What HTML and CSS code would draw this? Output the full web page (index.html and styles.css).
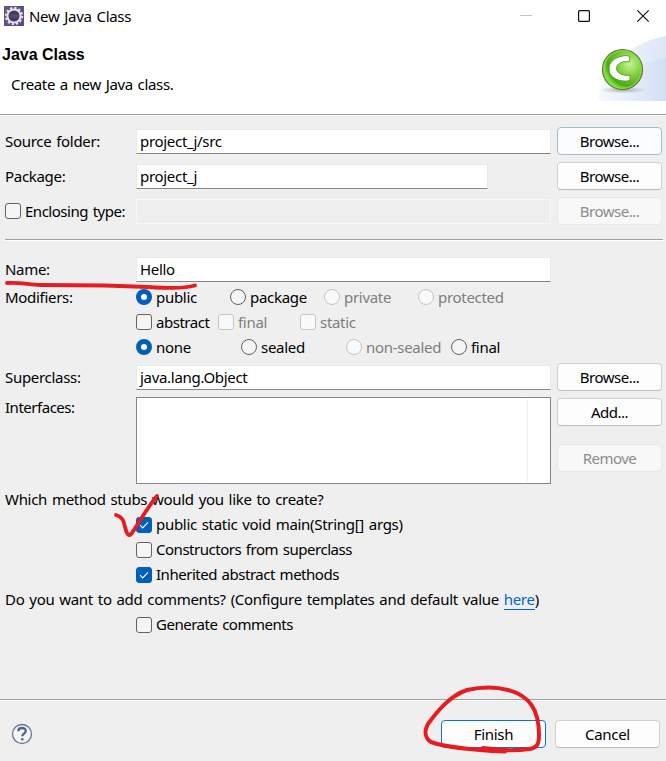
FILE: index.html
```html
<!DOCTYPE html>
<html lang="en">
<head>
<meta charset="utf-8">
<title>New Java Class</title>
<link rel="stylesheet" href="styles.css">
</head>
<body>
<main class="dialog">
  <header class="head">
    <div class="titlebar">
      <svg class="app-icon" width="20" height="20" viewBox="0 0 20 20">
        <defs><linearGradient id="app" x1="0" y1="0" x2="1" y2="1"><stop offset="0" stop-color="#625a78"/><stop offset="1" stop-color="#62409a"/></linearGradient></defs>
        <rect width="20" height="20" fill="url(#app)"/>
        <circle cx="10" cy="10" r="8.2" fill="none" stroke="#e3dfe6" stroke-width="2" stroke-dasharray="2.3 1.993"/>
        <circle cx="10" cy="10" r="6.6" fill="#42395c" stroke="#e9e6ea" stroke-width="2"/>
        <path d="M5 9h10M5 11h10" stroke="#5f5678" stroke-width="1"/>
      </svg>
      <span class="caption">New Java Class</span>
      <svg class="controls" width="130" height="16" viewBox="0 0 130 16">
        <path d="M0 7.5h12" stroke="#c4c4c4" fill="none"/>
        <rect x="58.6" y="2.6" width="10.8" height="10.8" rx="1" fill="none" stroke="#111" stroke-width="1.2"/>
        <path d="M117.3 2.3l11.4 11.4M128.7 2.3L117.3 13.7" stroke="#111" stroke-width="1.2" fill="none"/>
      </svg>
    </div>
    <div class="banner">
      <div>
        <h1>Java Class</h1>
        <p>Create a new Java class.</p>
      </div>
      <svg class="emblem" width="68" height="66" viewBox="0 0 68 66">
        <defs>
          <linearGradient id="sky" x1="0" x2="1"><stop offset="0" stop-color="#f7f9fe"/><stop offset="1" stop-color="#dce6f7"/></linearGradient>
          <linearGradient id="sky2" x1="0" x2="1"><stop offset="0" stop-color="#eef3fc" stop-opacity="0"/><stop offset="1" stop-color="#cbdaf2"/></linearGradient>
          <radialGradient id="ball" cx=".68" cy=".36" r=".65"><stop offset="0" stop-color="#c9f29c"/><stop offset=".4" stop-color="#8ad648"/><stop offset=".85" stop-color="#4bac16"/><stop offset="1" stop-color="#7be03d"/></radialGradient>
          <radialGradient id="shade"><stop offset="0" stop-color="#85878a" stop-opacity=".7"/><stop offset="1" stop-color="#999" stop-opacity="0"/></radialGradient>
        </defs>
        <path d="M0 66C2 38 31 7 68 1v65z" fill="url(#sky)"/>
        <path d="M0 66C14 45 40 26 68 23v43z" fill="url(#sky2)" opacity=".65"/>
        <ellipse cx="25" cy="55" rx="24" ry="3.5" fill="url(#shade)"/>
        <circle cx="24.5" cy="34.5" r="20" fill="url(#ball)" stroke="#68733e" stroke-width="1.2"/>
        <circle cx="24.5" cy="34.5" r="18.6" fill="none" stroke="#83e044" stroke-width="1.4" opacity=".8"/>
        <path d="M32 21.500C29 20.300 27 20.500 24.500 21C16 22.500 11 27.500 11 34S16.500 45 25 46C27.500 46.300 29.500 46 32 45.500V40C29.500 40.500 27.500 40.500 25.500 39.800C21.500 38.800 18.500 37 18.500 33.500S21.500 27.800 25 27C27.500 26.500 29.500 26.500 31 27z" fill="#fff" stroke="#4d9b25" stroke-width=".9"/>
      </svg>
    </div>
  </header>

  <section class="form">
    <div class="row"><label class="name">Source folder:</label><div class="field">project_j/src</div><button class="btn hot">Browse...</button></div>
    <div class="row"><label class="name">Package:</label><div class="field short">project_j</div><button class="btn">Browse...</button></div>
    <div class="row"><label class="name opt"><i class="box"></i><span class="tight">Enclosing type:</span></label><div class="field off"></div><button class="btn dim">Browse...</button></div>
    <hr>
    <div class="row"><label class="name">Name:</label><div class="field">Hello</div></div>

    <div class="mods">
      <span class="name">Modifiers:</span>
      <div class="choices access">
        <label class="opt"><i class="dot on"></i>public</label><label class="opt"><i class="dot"></i>package</label><label class="opt dim"><i class="dot"></i>private</label><label class="opt dim"><i class="dot"></i>protected</label>
      </div>
      <div class="choices flags">
        <label class="opt"><i class="box"></i><span class="tight">abstract</span></label><label class="opt dim"><i class="box"></i>final</label><label class="opt dim"><i class="box"></i>static</label>
      </div>
      <div class="choices seal">
        <label class="opt"><i class="dot on"></i>none</label><label class="opt"><i class="dot"></i>sealed</label><label class="opt dim"><i class="dot"></i>non-sealed</label><label class="opt"><i class="dot"></i>final</label>
      </div>
    </div>

    <div class="row super"><label class="name">Superclass:</label><div class="field">java.lang.Object</div><button class="btn">Browse...</button></div>
    <div class="faces"><span class="name tight">Interfaces:</span><div class="list"><div class="gutter"></div></div><div class="side"><button class="btn">Add...</button><button class="btn dim">Remove</button></div></div>

    <p class="line first">Which method stubs would you like to create?</p>
    <label class="line opt stub"><i class="box on"><svg viewBox="0 0 16 16"><path d="M4 8.2l2.7 2.7L12 5.4"/></svg></i><span>public static void main(String[] args)</span></label>
    <label class="line opt stub"><i class="box"></i><span class="tight">Constructors from superclass</span></label>
    <label class="line opt stub"><i class="box on"><svg viewBox="0 0 16 16"><path d="M4 8.2l2.7 2.7L12 5.4"/></svg></i><span class="tight">Inherited abstract methods</span></label>
    <p class="line">Do you want to add comments? (Configure templates and default value <a>here</a>)</p>
    <label class="line opt stub"><i class="box"></i><span class="tight">Generate comments</span></label>
  </section>

  <footer class="foot">
    <svg class="help" width="22" height="22" viewBox="0 0 22 22">
      <circle cx="11" cy="11" r="9.5" fill="#f5f5f6" stroke="#65799a" stroke-width="1.3"/>
      <path d="M7.3 8.2C7.3 3.9 14.8 4 14.8 8c0 2.7-3.5 2.7-3.5 5.3" fill="none" stroke="#4e658d" stroke-width="2.3"/>
      <circle cx="11.3" cy="16.3" r="1.3" fill="#4e658d"/>
    </svg>
    <button class="btn primary">Finish</button>
    <button class="btn">Cancel</button>
  </footer>

  <svg class="marks" width="666" height="761" viewBox="0 0 666 761">
    <path d="M7 283C20 282 30 285 40 285L105 285.500 148 287C165 288 182 289 195 285.500" stroke-width="3.800"/>
    <path d="M116 515C123 517 124 522 125 527C127 535 129 537 132 533C140 521 147 508 157 496" stroke-width="3.800"/>
    <path d="M483 748C497 750 515 751 529 749C538 748 539 743 539 735C539 710 530 696 508 690C493 686 476 688 467 690C449 696 436 713 428 724C424 731 425 738 431 742C448 748 473 750 505 751.500" stroke-width="4"/>
  </svg>
</main>
</body>
</html>
```
FILE: styles.css
```css
* { box-sizing: border-box; }
body { margin: 0; background: #efefef; color: #000; font: 15px/20px "Noto Sans", "Liberation Sans", sans-serif; letter-spacing: -.3px; word-spacing: 1.25px; }
h1, p { margin: 0; }
.dialog { position: relative; width: 666px; height: 761px; overflow: hidden; display: flex; flex-direction: column; }
.head { height: 116px; background: #fff; border-bottom: 1px solid #fff; box-shadow: inset 0 -1px #a0a0a0; }
.titlebar { height: 32px; display: flex; align-items: center; padding-left: 4px; }
.caption { margin-left: 5px; flex: 1; }
.controls { margin-right: 16px; }
.banner { height: 82px; display: flex; justify-content: space-between; padding-top: 3px; }
.banner h1 { font: bold 16px/20px "Liberation Sans", Arial, sans-serif; letter-spacing: 0; word-spacing: 0; margin: 10px 0 0 2px; }
.banner p { margin: 9px 0 0 11px; letter-spacing: -.35px; }
.emblem { align-self: flex-start; }
.form { flex: 1; padding: 11px 4px 0 5px; }
.row { display: flex; align-items: center; height: 28px; margin-bottom: 7px; }
.name { width: 131px; flex: none; }
.field { width: 415px; height: 25px; flex: none; background: #fff; border: 1px solid #e9e9e9; border-bottom-color: #868686; padding: 0 3px; line-height: 22px; margin-right: 6px; }
.field.short { width: 352px; margin-right: 69px; }
.field.off { background: #efefef; border-color: #f8f8f8; }
.btn { width: 105px; height: 28px; flex: none; padding: 0; border: 1px solid #d0d0d0; border-bottom-color: #bbb; border-radius: 4px; background: #fdfdfd; font: inherit; letter-spacing: -.5px; color: #000; text-align: center; }
.btn.hot { border-color: #a5bccd; background: #fafcfe; }
.btn.primary { border-color: #0078d4; }
.foot .btn { letter-spacing: -.3px; }
.dim { color: #7e7e7e; }
.btn.dim { color: #8c8c8c; border-color: #e7e7e7; background: #f8f8f8; }
hr { height: 2px; margin: 14px -1px 14px 0; border: 0; background: linear-gradient(#a0a0a0 50%, #fff 50%); }
.mods { display: grid; grid-template-columns: 131px 1fr; grid-auto-rows: 25px; align-items: center; margin-top: -6px; }
.choices { grid-column: 2; display: grid; }
.access { grid-template-columns: repeat(4, 94px); }
.flags { grid-template-columns: repeat(3, 82px); }
.seal { grid-template-columns: repeat(4, 105px); }
.opt { display: flex; align-items: center; white-space: nowrap; }
.box, .dot { width: 16px; height: 16px; flex: none; margin-right: 4px; border: 1px solid #626262; background: #f5f5f5; }
.box { border-radius: 3px; }
.dot { border-radius: 50%; }
.dim .box, .dim .dot { border-color: #c5c5c5; background: #f9f9f9; }
.dot.on { border: 5px solid #005fb8; background: #fff; }
.box.on { border-color: #005fb8; background: #005fb8; }
.box svg { display: block; margin: -1px; width: 16px; height: 16px; fill: none; stroke: #fff; stroke-width: 1.1; }
.super { margin-top: 4px; margin-bottom: 6px; }
.faces { display: flex; height: 87px; }
.list { width: 415px; border: 1px solid #828790; background: #fff; margin-right: 6px; padding: 1px 22px 1px 1px; }
.gutter { height: 100%; border-right: 1px solid #edf0f5; }
.side { display: flex; flex-direction: column; gap: 18px; padding-top: 1px; }
.line { height: 25px; line-height: 25px; white-space: nowrap; }
.first { margin-top: 3px; }
.stub { padding-left: 131px; }
.tight { letter-spacing: -.48px; }
.line a { color: #0066cc; border-bottom: 1px solid #0066cc; }
.foot { height: 62px; display: flex; align-items: center; gap: 9px; padding: 8px 6px 0 11px; background: linear-gradient(#a0a0a0 1px, #fff 1px, #fff 2px, #efefef 2px); }
.help { margin-right: auto; }
.marks { position: absolute; inset: 0; fill: none; stroke: #e51c20; stroke-linecap: round; stroke-linejoin: round; pointer-events: none; }
```
